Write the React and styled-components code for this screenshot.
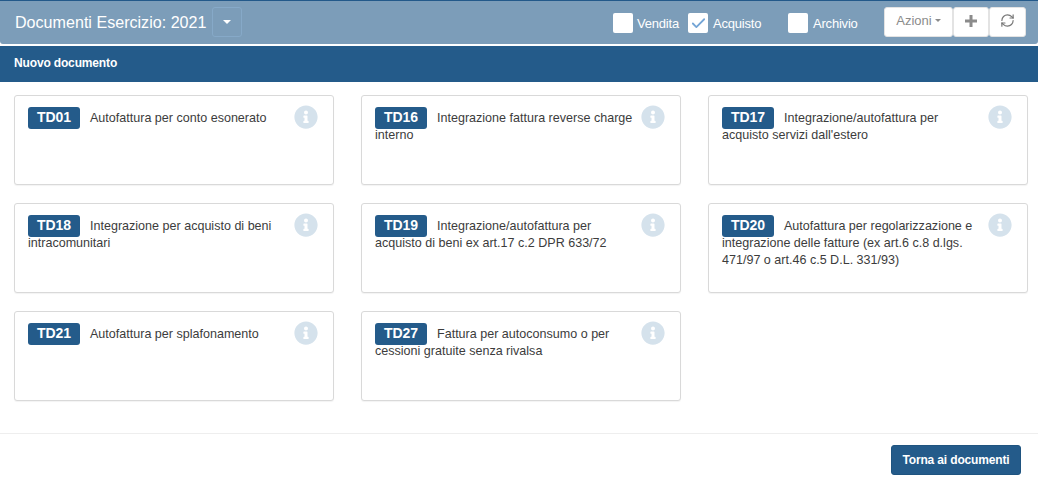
import React from "react";
import styled, { createGlobalStyle } from "styled-components";
import { FaInfoCircle } from "react-icons/fa";
import { Check, RefreshCw } from "lucide-react";

const GlobalStyle = createGlobalStyle`
  html, body {
    margin: 0;
    padding: 0;
    background: #fff;
    font-family: "Liberation Sans", Arial, sans-serif;
  }
`;

const Page = styled.div`
  width: 1038px;
  height: 491px;
  display: flex;
  flex-direction: column;
  overflow: hidden;
`;

const Header = styled.header`
  box-sizing: border-box;
  height: 44px;
  flex: none;
  display: flex;
  align-items: flex-start;
  padding: 7px 12px 0 15px;
  background: #7c9db9;
  border-top: 1px solid #23598a;
  border-radius: 0 0 3px 3px;
  color: #fff;
`;

const Title = styled.h1`
  margin: 0;
  font-size: 16.1px;
  font-weight: 400;
  line-height: 29px;
`;

const CaretButton = styled.button`
  width: 30px;
  height: 30px;
  margin: -1px 0 0 6px;
  padding: 0;
  display: flex;
  align-items: center;
  justify-content: center;
  background: transparent;
  border: 1px solid #86a9c8;
  border-radius: 3px;
`;

const Caret = styled.span`
  width: 0;
  height: 0;
  border-top: ${({ $size }) => $size}px solid ${({ $color }) => $color};
  border-left: ${({ $size }) => $size}px solid transparent;
  border-right: ${({ $size }) => $size}px solid transparent;
`;

const Checks = styled.div`
  margin-left: auto;
  display: flex;
  align-items: center;
  height: 30px;
`;

const CheckItem = styled.label`
  width: ${({ $width }) => $width}px;
  display: flex;
  align-items: center;
  gap: ${({ $gap }) => $gap}px;
  font-size: 13px;
  letter-spacing: -0.2px;
`;

const CheckBox = styled.span`
  width: 20px;
  height: 20px;
  display: flex;
  align-items: center;
  justify-content: center;
  background: #fff;
  border-radius: 2px;
  color: #74a5d6;
`;

const Actions = styled.div`
  display: flex;
  height: 30px;
  margin-top: -1px;
`;

const ActionButton = styled.button`
  box-sizing: border-box;
  width: ${({ $width }) => $width}px;
  display: flex;
  align-items: center;
  justify-content: center;
  gap: 3px;
  padding: 0 0 3px;
  background: #fff;
  border: 1px solid #e3e3e3;
  border-radius: 3px;
  color: #8b8b8b;
  font: 13px "Liberation Sans", Arial, sans-serif;
`;

const SubHeader = styled.div`
  box-sizing: border-box;
  flex: none;
  height: 36px;
  margin-top: 2px;
  padding: 0 14px 2px;
  display: flex;
  align-items: center;
  background: #245b8a;
  color: #fff;
  font-size: 12px;
  font-weight: 700;
  letter-spacing: -0.15px;
`;

const Content = styled.main`
  flex: 1;
  display: grid;
  grid-template-columns: repeat(3, 320px);
  grid-auto-rows: 90px;
  column-gap: 27px;
  row-gap: 18px;
  padding: 13px 14px 0;
`;

const Card = styled.article`
  box-sizing: border-box;
  padding: 9px 15px 0 13px;
  background: #fff;
  border: 1px solid #d9d9d9;
  border-radius: 3px;
  box-shadow: 0 1px 1px rgba(0, 0, 0, 0.05);
  color: #3c3c3c;
  font-size: 12.55px;
  line-height: 17px;
`;

const InfoIcon = styled(FaInfoCircle)`
  float: right;
  width: 24px;
  height: 24px;
  margin-left: 8px;
  color: #d5e2ec;
`;

const CardLine = styled.div`
  padding-top: 5px;
`;

const Badge = styled.span`
  display: inline-block;
  width: 52px;
  height: 22px;
  margin: -3px 10px -2px 0;
  background: #245b8a;
  border-radius: 3px;
  color: #fff;
  font-size: 14px;
  font-weight: 700;
  line-height: 21px;
  text-align: center;
  vertical-align: top;
`;

const Footer = styled.footer`
  box-sizing: border-box;
  flex: none;
  height: 58px;
  padding: 11px 17px 0 0;
  display: flex;
  justify-content: flex-end;
  align-items: flex-start;
  border-top: 1px solid #eee;
`;

const BackButton = styled.button`
  width: 130px;
  height: 30px;
  padding: 0;
  background: #245b8a;
  border: 1px solid #1f5480;
  border-radius: 3px;
  color: #fff;
  font: 700 12px "Liberation Sans", Arial, sans-serif;
  letter-spacing: -0.15px;
`;

const documents = [
  { code: "TD01", text: "Autofattura per conto esonerato" },
  { code: "TD16", text: "Integrazione fattura reverse charge interno" },
  { code: "TD17", text: "Integrazione/autofattura per acquisto servizi dall'estero" },
  { code: "TD18", text: "Integrazione per acquisto di beni intracomunitari" },
  { code: "TD19", text: "Integrazione/autofattura per acquisto di beni ex art.17 c.2 DPR 633/72" },
  {
    code: "TD20",
    text: "Autofattura per regolarizzazione e integrazione delle fatture (ex art.6 c.8 d.lgs. 471/97 o art.46 c.5 D.L. 331/93)",
  },
  { code: "TD21", text: "Autofattura per splafonamento" },
  { code: "TD27", text: "Fattura per autoconsumo o per cessioni gratuite senza rivalsa" },
];

export default function App() {
  return (
    <Page>
      <GlobalStyle />
      <Header>
        <Title>Documenti Esercizio: 2021</Title>
        <CaretButton>
          <Caret $color="#fff" $size={4} />
        </CaretButton>
        <Checks>
          <CheckItem $width={75} $gap={4}>
            <CheckBox />
            Vendita
          </CheckItem>
          <CheckItem $width={100} $gap={5}>
            <CheckBox>
              <Check size={17} strokeWidth={2.5} />
            </CheckBox>
            Acquisto
          </CheckItem>
          <CheckItem $width={96} $gap={5}>
            <CheckBox />
            Archivio
          </CheckItem>
        </Checks>
        <Actions>
          <ActionButton $width={69}>
            Azioni
            <Caret $color="#8b8b8b" $size={3} />
          </ActionButton>
          <ActionButton $width={36}>
            <svg width="12" height="12" viewBox="0 0 12 12" fill="currentColor">
              <path d="M4.5 0h3v4.5H12v3H7.5V12h-3V7.5H0v-3h4.5z" />
            </svg>
          </ActionButton>
          <ActionButton $width={37}>
            <RefreshCw size={15} strokeWidth={1.9} color="#777" />
          </ActionButton>
        </Actions>
      </Header>
      <SubHeader>Nuovo documento</SubHeader>
      <Content>
        {documents.map(({ code, text }) => (
          <Card key={code}>
            <InfoIcon />
            <CardLine>
              <Badge>{code}</Badge>
              {text}
            </CardLine>
          </Card>
        ))}
      </Content>
      <Footer>
        <BackButton>Torna ai documenti</BackButton>
      </Footer>
    </Page>
  );
}
